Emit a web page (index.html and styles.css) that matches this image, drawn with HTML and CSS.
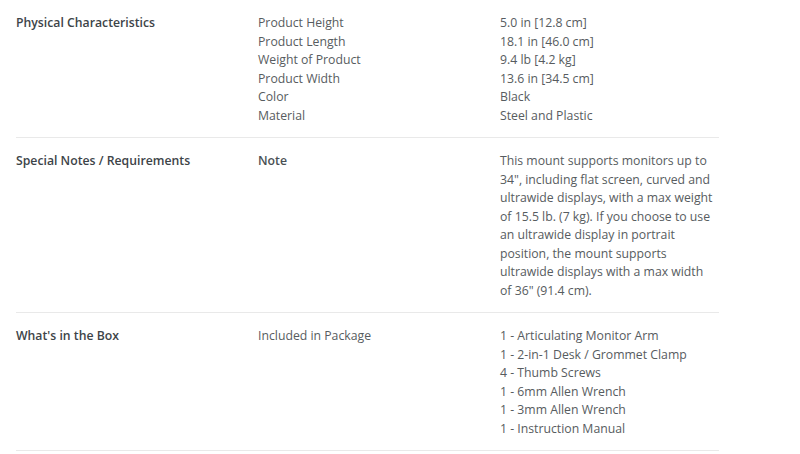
FILE: index.html
```html
<!DOCTYPE html>
<html>
<head>
<meta charset="utf-8">
<link rel="stylesheet" href="styles.css">
</head>
<body>
<div class="specs">
  <div class="row">
    <div class="label">Physical Characteristics</div>
    <div class="names">
      <div>Product Height</div>
      <div>Product Length</div>
      <div>Weight of Product</div>
      <div>Product Width</div>
      <div>Color</div>
      <div>Material</div>
    </div>
    <div class="values">
      <div>5.0 in [12.8 cm]</div>
      <div>18.1 in [46.0 cm]</div>
      <div>9.4 lb [4.2 kg]</div>
      <div>13.6 in [34.5 cm]</div>
      <div>Black</div>
      <div>Steel and Plastic</div>
    </div>
  </div>
  <div class="row">
    <div class="label">Special Notes / Requirements</div>
    <div class="names"><div class="strong">Note</div></div>
    <div class="values"><div>This mount supports monitors up to 34", including flat screen, curved and ultrawide displays, with a max weight of 15.5 lb. (7 kg). If you choose to use an ultrawide display in portrait position, the mount supports ultrawide displays with a max width of 36" (91.4 cm).</div></div>
  </div>
  <div class="row">
    <div class="label">What's in the Box</div>
    <div class="names"><div>Included in Package</div></div>
    <div class="values">
      <div>1 - Articulating Monitor Arm</div>
      <div>1 - 2-in-1 Desk / Grommet Clamp</div>
      <div>4 - Thumb Screws</div>
      <div>1 - 6mm Allen Wrench</div>
      <div>1 - 3mm Allen Wrench</div>
      <div>1 - Instruction Manual</div>
    </div>
  </div>
</div>
</body>
</html>
```
FILE: styles.css
```css
html, body {
  margin: 0;
  padding: 0;
  background: #ffffff;
}
body {
  font-family: "Open Sans", "DejaVu Sans", sans-serif;
  font-size: 12.25px;
  line-height: 18.5px;
  color: #575c60;
}
.specs {
  width: 703px;
  margin-left: 16px;
}
.row {
  display: grid;
  grid-template-columns: 242px 242px 1fr;
  padding: 14px 0 12px;
  border-bottom: 1px solid #e9e9e9;
}
.label {
  font-weight: 600;
  color: #3d4448;
}
.strong {
  font-weight: 600;
  color: #4a5054;
}
.values {
  padding-right: 2px;
}
```
